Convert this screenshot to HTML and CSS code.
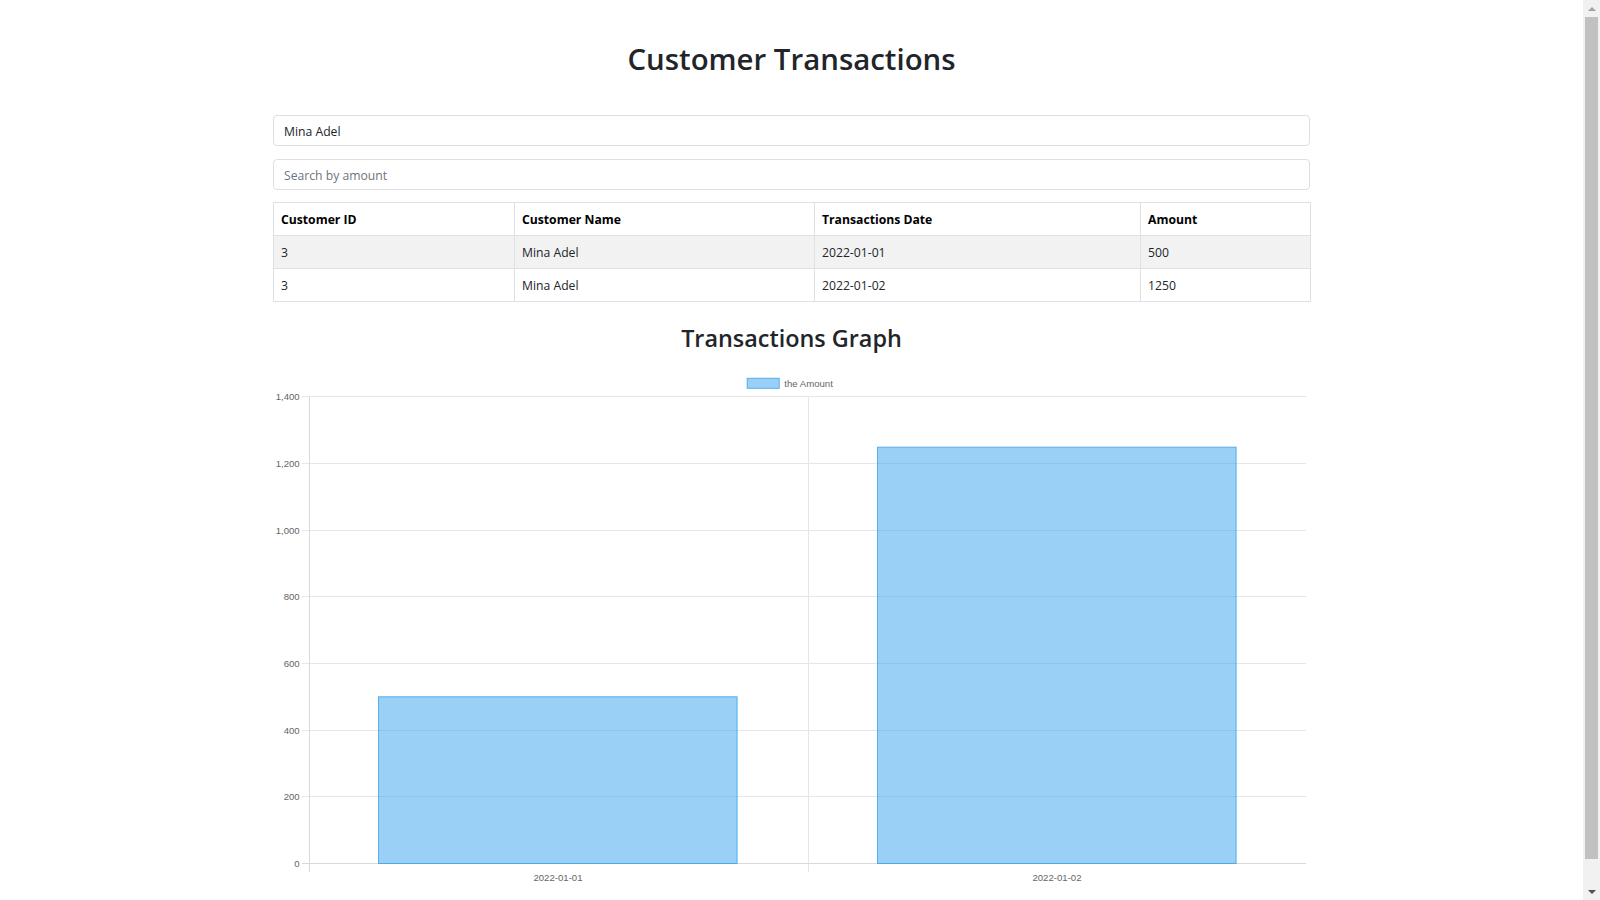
FILE: index.html
```html
<!DOCTYPE html>
<html lang="en">
<head>
<meta charset="utf-8">
<title>Customer Transactions</title>
<link rel="stylesheet" href="styles.css">
</head>
<body>
<main class="page">
  <h1 class="title">Customer Transactions</h1>
  <input class="field" type="text" value="Mina Adel">
  <input class="field" type="text" placeholder="Search by amount">
  <table class="tx-table">
    <colgroup>
      <col class="c1"><col class="c2"><col class="c3"><col class="c4">
    </colgroup>
    <thead>
      <tr><th>Customer ID</th><th>Customer Name</th><th>Transactions Date</th><th>Amount</th></tr>
    </thead>
    <tbody>
      <tr class="striped"><td>3</td><td>Mina Adel</td><td>2022-01-01</td><td>500</td></tr>
      <tr><td>3</td><td>Mina Adel</td><td>2022-01-02</td><td>1250</td></tr>
    </tbody>
  </table>
  <h2 class="subtitle">Transactions Graph</h2>
  <svg class="chart" viewBox="0 0 1037 518" xmlns="http://www.w3.org/2000/svg">
    <rect class="bar" x="474.2" y="10.3" width="32" height="10"/>
    <text class="legend" x="511.3" y="18.5">the Amount</text>
    <g class="grid">
      <line x1="29" y1="28.5" x2="1033" y2="28.5"/>
      <line x1="29" y1="95.5" x2="1033" y2="95.5"/>
      <line x1="29" y1="162.5" x2="1033" y2="162.5"/>
      <line x1="29" y1="228.5" x2="1033" y2="228.5"/>
      <line x1="29" y1="295.5" x2="1033" y2="295.5"/>
      <line x1="29" y1="362.5" x2="1033" y2="362.5"/>
      <line x1="29" y1="428.5" x2="1033" y2="428.5"/>
      <line x1="535.5" y1="28.5" x2="535.5" y2="504"/>
    </g>
    <g class="axis">
      <line x1="29" y1="495.5" x2="1033" y2="495.5"/>
      <line x1="36.5" y1="28.5" x2="36.5" y2="504"/>
    </g>
    <g class="tick">
      <text x="26.7" y="31.9">1,400</text>
      <text x="26.7" y="98.9">1,200</text>
      <text x="26.7" y="165.9">1,000</text>
      <text x="26.7" y="231.9">800</text>
      <text x="26.7" y="298.9">600</text>
      <text x="26.7" y="365.9">400</text>
      <text x="26.7" y="431.9">200</text>
      <text x="26.7" y="498.9">0</text>
    </g>
    <rect class="bar" x="105.5" y="328.8" width="358.6" height="166.7"/>
    <rect class="bar" x="604.5" y="79.2" width="358.6" height="416.3"/>
    <g class="xtick">
      <text x="285" y="513">2022-01-01</text>
      <text x="784" y="513">2022-01-02</text>
    </g>
  </svg>
</main>
<div class="scrollbar" aria-hidden="true">
  <span class="arrow-up"></span>
  <span class="thumb"></span>
  <span class="arrow-down"></span>
</div>
</body>
</html>
```

FILE: styles.css
```css
html, body {
  margin: 0;
  padding: 0;
  background: #ffffff;
}

body {
  padding-right: 17px;
  font-family: "Segoe UI", "Open Sans", "Noto Sans", sans-serif;
  color: #212529;
}

.page {
  width: 1037px;
  margin: 0 auto;
  padding: 40px 0 41px;
  display: flex;
  flex-direction: column;
}

.title {
  margin: 0 0 37px;
  font-size: 29.4px;
  line-height: 38px;
  font-weight: 600;
  text-align: center;
  color: #212529;
}

.field {
  box-sizing: border-box;
  display: block;
  width: 100%;
  height: 31px;
  margin: 0 0 13px;
  padding: 1px 10px 0;
  border: 1px solid #dcdfe3;
  border-radius: 4px;
  font-family: inherit;
  font-size: 12.2px;
  color: #212529;
  background: #fff;
  outline: none;
}

.field::placeholder {
  color: #6c757d;
  opacity: 1;
}

.tx-table {
  width: 100%;
  margin-top: -1px;
  border-collapse: collapse;
  table-layout: fixed;
  font-size: 12.2px;
  color: #212529;
}

.c1 { width: 241px; }
.c2 { width: 300px; }
.c3 { width: 326px; }
.c4 { width: 170px; }

.tx-table th,
.tx-table td {
  border: 1px solid #dee2e6;
  padding: 7px 7px 5px;
  line-height: 20px;
  text-align: left;
  vertical-align: top;
}

.tx-table th {
  font-weight: 700;
  color: #000;
}

.tx-table .striped td {
  background: #f2f2f2;
}

.subtitle {
  margin: 21px 0 14px;
  font-size: 23.4px;
  line-height: 31px;
  font-weight: 600;
  text-align: center;
  color: #212529;
}

.chart {
  display: block;
  width: 1037px;
  height: 518px;
}

.grid line {
  stroke: #e6e6e6;
  stroke-width: 1;
}

.axis line {
  stroke: #d9d9d9;
  stroke-width: 1;
}

.bar {
  fill: rgba(54, 162, 235, 0.5);
  stroke: rgba(54, 162, 235, 0.8);
  stroke-width: 1;
}

.tick text,
.xtick text,
.legend {
  font-family: "Liberation Sans", Arial, sans-serif;
  font-size: 9.6px;
  fill: #666666;
}

.tick text {
  text-anchor: end;
}

.xtick text {
  text-anchor: middle;
}

/* imitation of the browser's vertical scrollbar */
.scrollbar {
  position: fixed;
  top: 0;
  right: 0;
  width: 17px;
  height: 100vh;
  background: #f1f1f1;
  display: flex;
  flex-direction: column;
  align-items: center;
}

.arrow-up,
.arrow-down {
  flex: 0 0 17px;
  width: 0;
  height: 0;
  box-sizing: border-box;
  display: flex;
  align-items: center;
  justify-content: center;
}

.arrow-up::before {
  content: "";
  border-left: 4px solid transparent;
  border-right: 4px solid transparent;
  border-bottom: 4px solid #a3a3a3;
}

.arrow-down::before {
  content: "";
  border-left: 4px solid transparent;
  border-right: 4px solid transparent;
  border-top: 4px solid #505050;
}

.thumb {
  flex: 0 0 842px;
  width: 13px;
  background: #c1c1c1;
}

.arrow-down {
  margin-top: auto;
}
```
